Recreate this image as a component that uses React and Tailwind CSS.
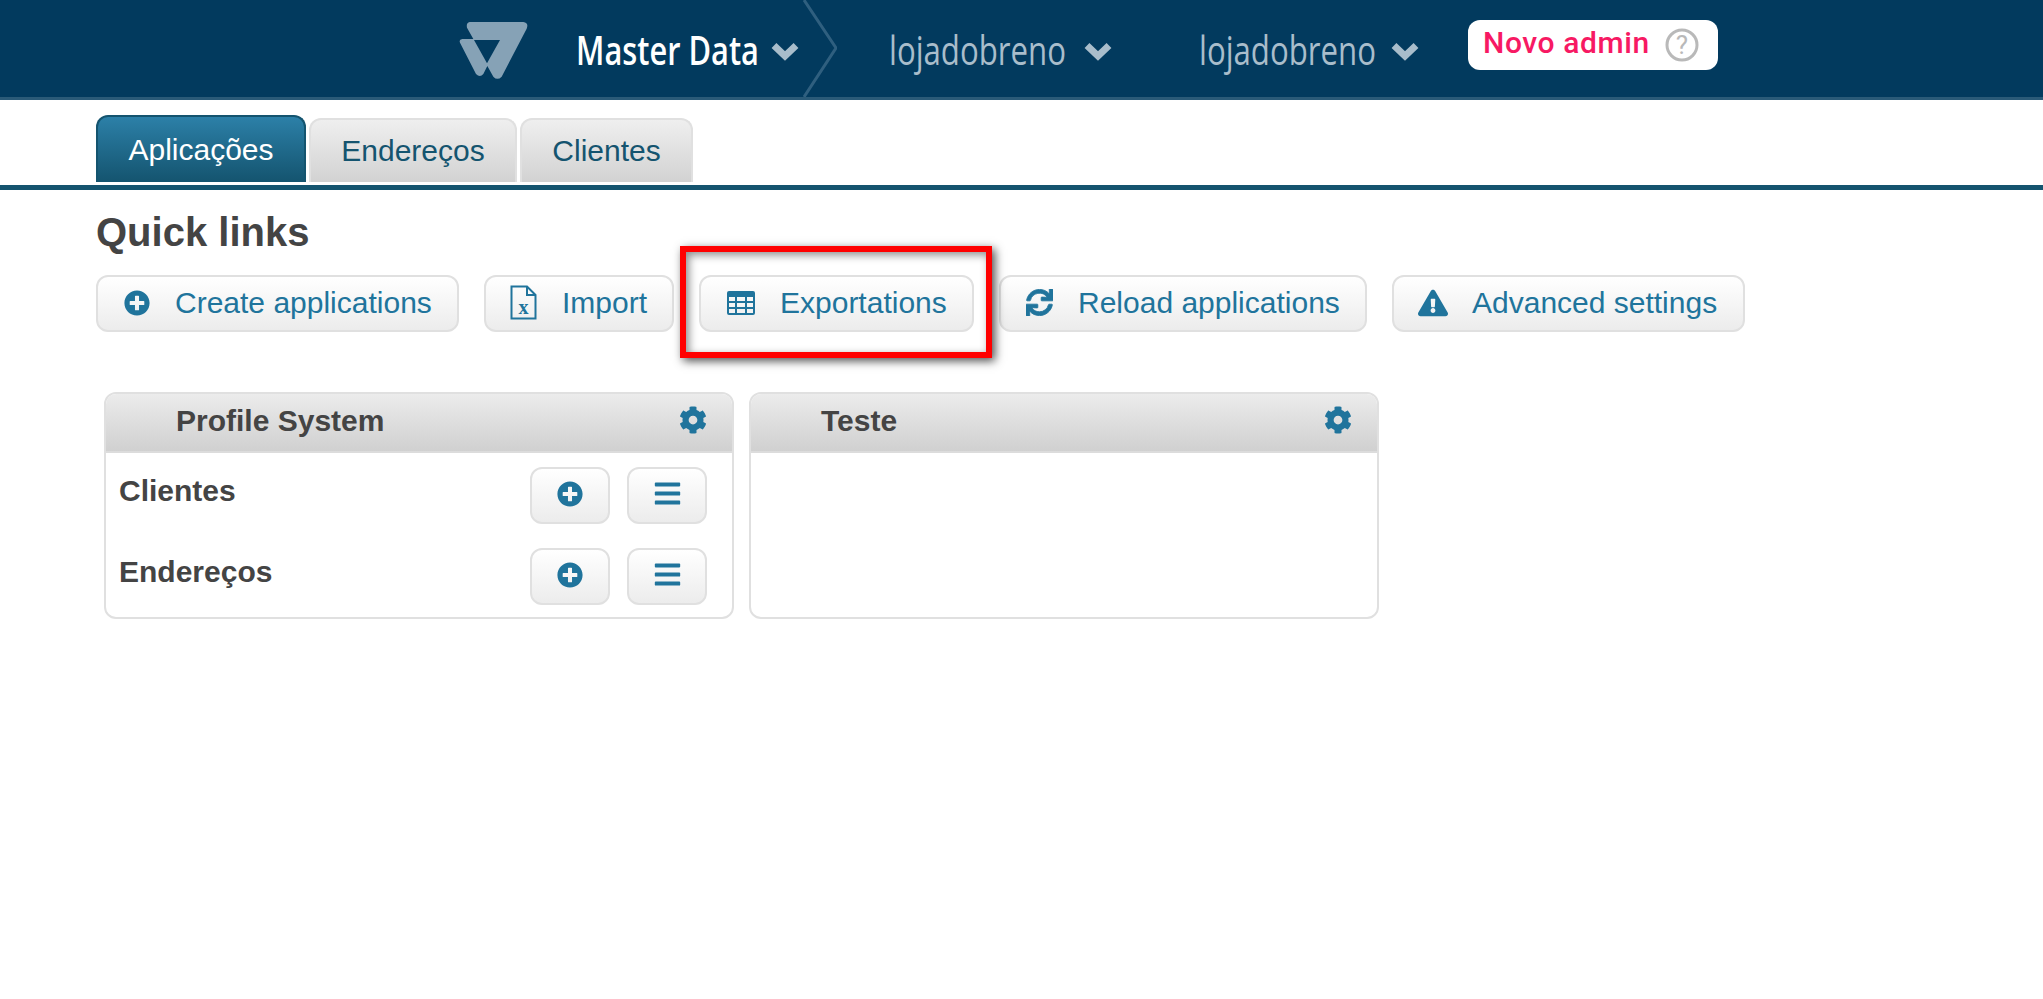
import { FaPlusCircle, FaSync, FaExclamationTriangle, FaCog, FaBars } from 'react-icons/fa'

function Logo() {
  return (
    <svg viewBox="115 65 210 180" className="mt-[4px] h-[60px] w-[70px] shrink-0">
      <path
        fillRule="evenodd"
        fill="#86a2b6"
        d="M147 68 H308 Q325 70 318 88 L243 232 Q230 245 218 232 L200 200 L188 224 Q178 236 166 224 L118 130 Q114 120 125 119 L158 119 L139 85 Q136 70 147 68 Z M160 122 H238 L199 192 Z"
      />
    </svg>
  )
}

function Chevron() {
  return (
    <svg viewBox="0 0 28 20" className="mt-[4px] h-[20px] w-[28px] shrink-0">
      <path d="M3 4.5 L14 15 L25 4.5" fill="none" stroke="#a9bdcb" strokeWidth="7" />
    </svg>
  )
}

function TableIcon() {
  return (
    <svg viewBox="0 0 28 24" className="mr-[25px] h-[24px] w-[28px] shrink-0">
      <path
        fillRule="evenodd"
        fill="currentColor"
        d="M2 0 H26 Q28 0 28 2 V22 Q28 24 26 24 H2 Q0 24 0 22 V2 Q0 0 2 0 Z M2 6 V10 H8 V6 Z M10 6 V10 H18 V6 Z M20 6 V10 H26 V6 Z M2 12 V16 H8 V12 Z M10 12 V16 H18 V12 Z M20 12 V16 H26 V12 Z M2 18 V22 H8 V18 Z M10 18 V22 H18 V18 Z M20 18 V22 H26 V18 Z"
      />
    </svg>
  )
}

function HelpIcon() {
  return (
    <svg viewBox="0 0 34 34" className="ml-[15px] h-[34px] w-[34px] shrink-0">
      <circle cx="17" cy="17" r="15" fill="none" stroke="#b9b9b9" strokeWidth="3" />
      <text x="17" y="26" textAnchor="middle" fontSize="26" fontFamily="Roboto, sans-serif" fill="#b9b9b9">?</text>
    </svg>
  )
}

function NavItem({ label, active, className }) {
  return (
    <div className={`flex items-center pt-[2px] ${className}`}>
      <span className={`inline-block origin-left whitespace-nowrap text-[40px] leading-[48px] font-['Open_Sans',sans-serif] ${active ? 'scale-x-[.77] font-semibold text-white' : 'scale-x-[.78] font-medium text-[#a9bdcb]'}`}>
        {label}
      </span>
    </div>
  )
}

function QuickButton({ icon, label, className }) {
  return (
    <button className={`flex h-[57px] items-center rounded-[12px] border-2 border-[#e0e0e0] bg-gradient-to-b from-white to-[#ececec] pb-[2px] text-[30px] text-[#20749c] ${className}`}>
      {icon}
      <span className="whitespace-nowrap">{label}</span>
    </button>
  )
}

function RowButton({ children }) {
  return (
    <button className="flex h-[57px] w-[80px] items-center justify-center rounded-[12px] border-2 border-[#e0e0e0] bg-gradient-to-b from-white to-[#ececec] pb-[4px] text-[#20749c]">
      {children}
    </button>
  )
}

function Row({ label }) {
  return (
    <div className="flex h-[57px] items-start justify-between pl-[13px] pr-[25px]">
      <span className="pt-[5px] text-[30px] font-bold leading-[38px] text-[#444]">{label}</span>
      <div className="flex gap-[17px]">
        <RowButton><FaPlusCircle size={26} /></RowButton>
        <RowButton><FaBars size={29} /></RowButton>
      </div>
    </div>
  )
}

function Panel({ title, children }) {
  return (
    <div className="h-[227px] w-[630px] overflow-hidden rounded-[12px] border-2 border-[#e0e0e0] bg-white">
      <div className="flex h-[59px] items-center justify-between border-b-2 border-[#dcdcdc] bg-gradient-to-b from-[#ececec] to-[#d0d0d0] pb-[5px] pl-[70px] pr-[25px]">
        <span className="text-[30px] font-bold text-[#444]">{title}</span>
        <FaCog size={28} className="text-[#20749c]" />
      </div>
      {children}
    </div>
  )
}

export default function App() {
  return (
    <div className="relative min-h-screen bg-white font-['Liberation_Sans',Arial,sans-serif]">
      <header className="flex h-[100px] items-center border-b-[3px] border-[#2a5a78] bg-[#023a5e]">
        <div className="ml-[459px] flex h-full w-[344px] items-center">
          <Logo />
          <NavItem label="Master Data" active className="ml-[47px] w-[195px]" />
          <Chevron />
        </div>
        <svg viewBox="0 0 34 97" className="h-[97px] w-[34px] shrink-0 self-start">
          <path d="M1 0 L33 48 L1 97" fill="none" stroke="#2f5f7f" strokeWidth="3" />
        </svg>
        <NavItem label="lojadobreno" className="ml-[52px] w-[195px]" />
        <Chevron />
        <NavItem label="lojadobreno" className="ml-[87px] w-[192px]" />
        <Chevron />
        <div className="ml-[49px] mt-[20px] flex h-[50px] w-[250px] items-center self-start rounded-[12px] bg-white pl-[15px]">
          <span className="pb-[6px] font-['Roboto',sans-serif] text-[30px] font-medium tracking-[0.6px] text-[#f71963]">Novo admin</span>
          <HelpIcon />
        </div>
      </header>

      <nav className="flex items-end gap-[3px] px-[96px] pt-[15px]">
        <div className="flex h-[67px] w-[210px] items-center justify-center rounded-t-[12px] border-2 border-b-0 border-[#14546f] bg-gradient-to-b from-[#2c80a8] to-[#14546f] text-[30px] text-white">Aplicações</div>
        <div className="flex h-[64px] w-[208px] items-center justify-center rounded-t-[12px] border-2 border-b-0 border-[#e0e0e0] bg-gradient-to-b from-[#efefef] to-[#d2d2d2] pb-[2px] text-[30px] text-[#14546f]">Endereços</div>
        <div className="flex h-[64px] w-[173px] items-center justify-center rounded-t-[12px] border-2 border-b-0 border-[#e0e0e0] bg-gradient-to-b from-[#efefef] to-[#d2d2d2] pb-[2px] text-[30px] text-[#14546f]">Clientes</div>
      </nav>
      <div className="mt-[3px] h-[5px] bg-[#14546f]" />

      <main>
        <h2 className="ml-[96px] mt-[20px] text-[40px] font-bold leading-[44px] text-[#444]">Quick links</h2>

        <div className="ml-[96px] mt-[21px] flex gap-[25px]">
          <QuickButton className="w-[363px] pl-[26px]" icon={<FaPlusCircle size={26} className="mr-[25px]" />} label="Create applications" />
          <QuickButton className="w-[190px] pl-[24px]" icon={
            <svg viewBox="0 0 27 35" className="mr-[25px] h-[35px] w-[27px] shrink-0">
              <path d="M1.5 1.5 H17 L25.5 10 V33.5 H1.5 Z M17 1.5 V10 H25.5" fill="none" stroke="currentColor" strokeWidth="2" />
              <text x="13.5" y="29" textAnchor="middle" fontSize="20" fontFamily="Liberation Serif, serif" fontWeight="bold" fill="currentColor">x</text>
            </svg>
          } label="Import" />
          <QuickButton className="w-[275px] pl-[26px]" icon={<TableIcon />} label="Exportations" />
          <QuickButton className="w-[368px] pl-[25px]" icon={<FaSync size={27} stroke="currentColor" strokeWidth={16} className="mr-[25px]" />} label="Reload applications" />
          <QuickButton className="w-[353px] pl-[24px]" icon={<FaExclamationTriangle size={30} className="mr-[24px]" />} label="Advanced settings" />
        </div>

        <div className="ml-[104px] mt-[60px] flex gap-[15px]">
          <Panel title="Profile System">
            <div className="flex flex-col gap-[24px] pt-[14px]">
              <Row label="Clientes" />
              <Row label="Endereços" />
            </div>
          </Panel>
          <Panel title="Teste" />
        </div>
      </main>

      {/* red highlight drawn over the screenshot */}
      <div className="absolute left-[680px] top-[246px] h-[112px] w-[312px] border-[6px] border-[#ff0000] shadow-[3px_3px_9px_rgba(0,0,0,0.7),inset_3px_3px_9px_rgba(0,0,0,0.45)]" />
    </div>
  )
}
